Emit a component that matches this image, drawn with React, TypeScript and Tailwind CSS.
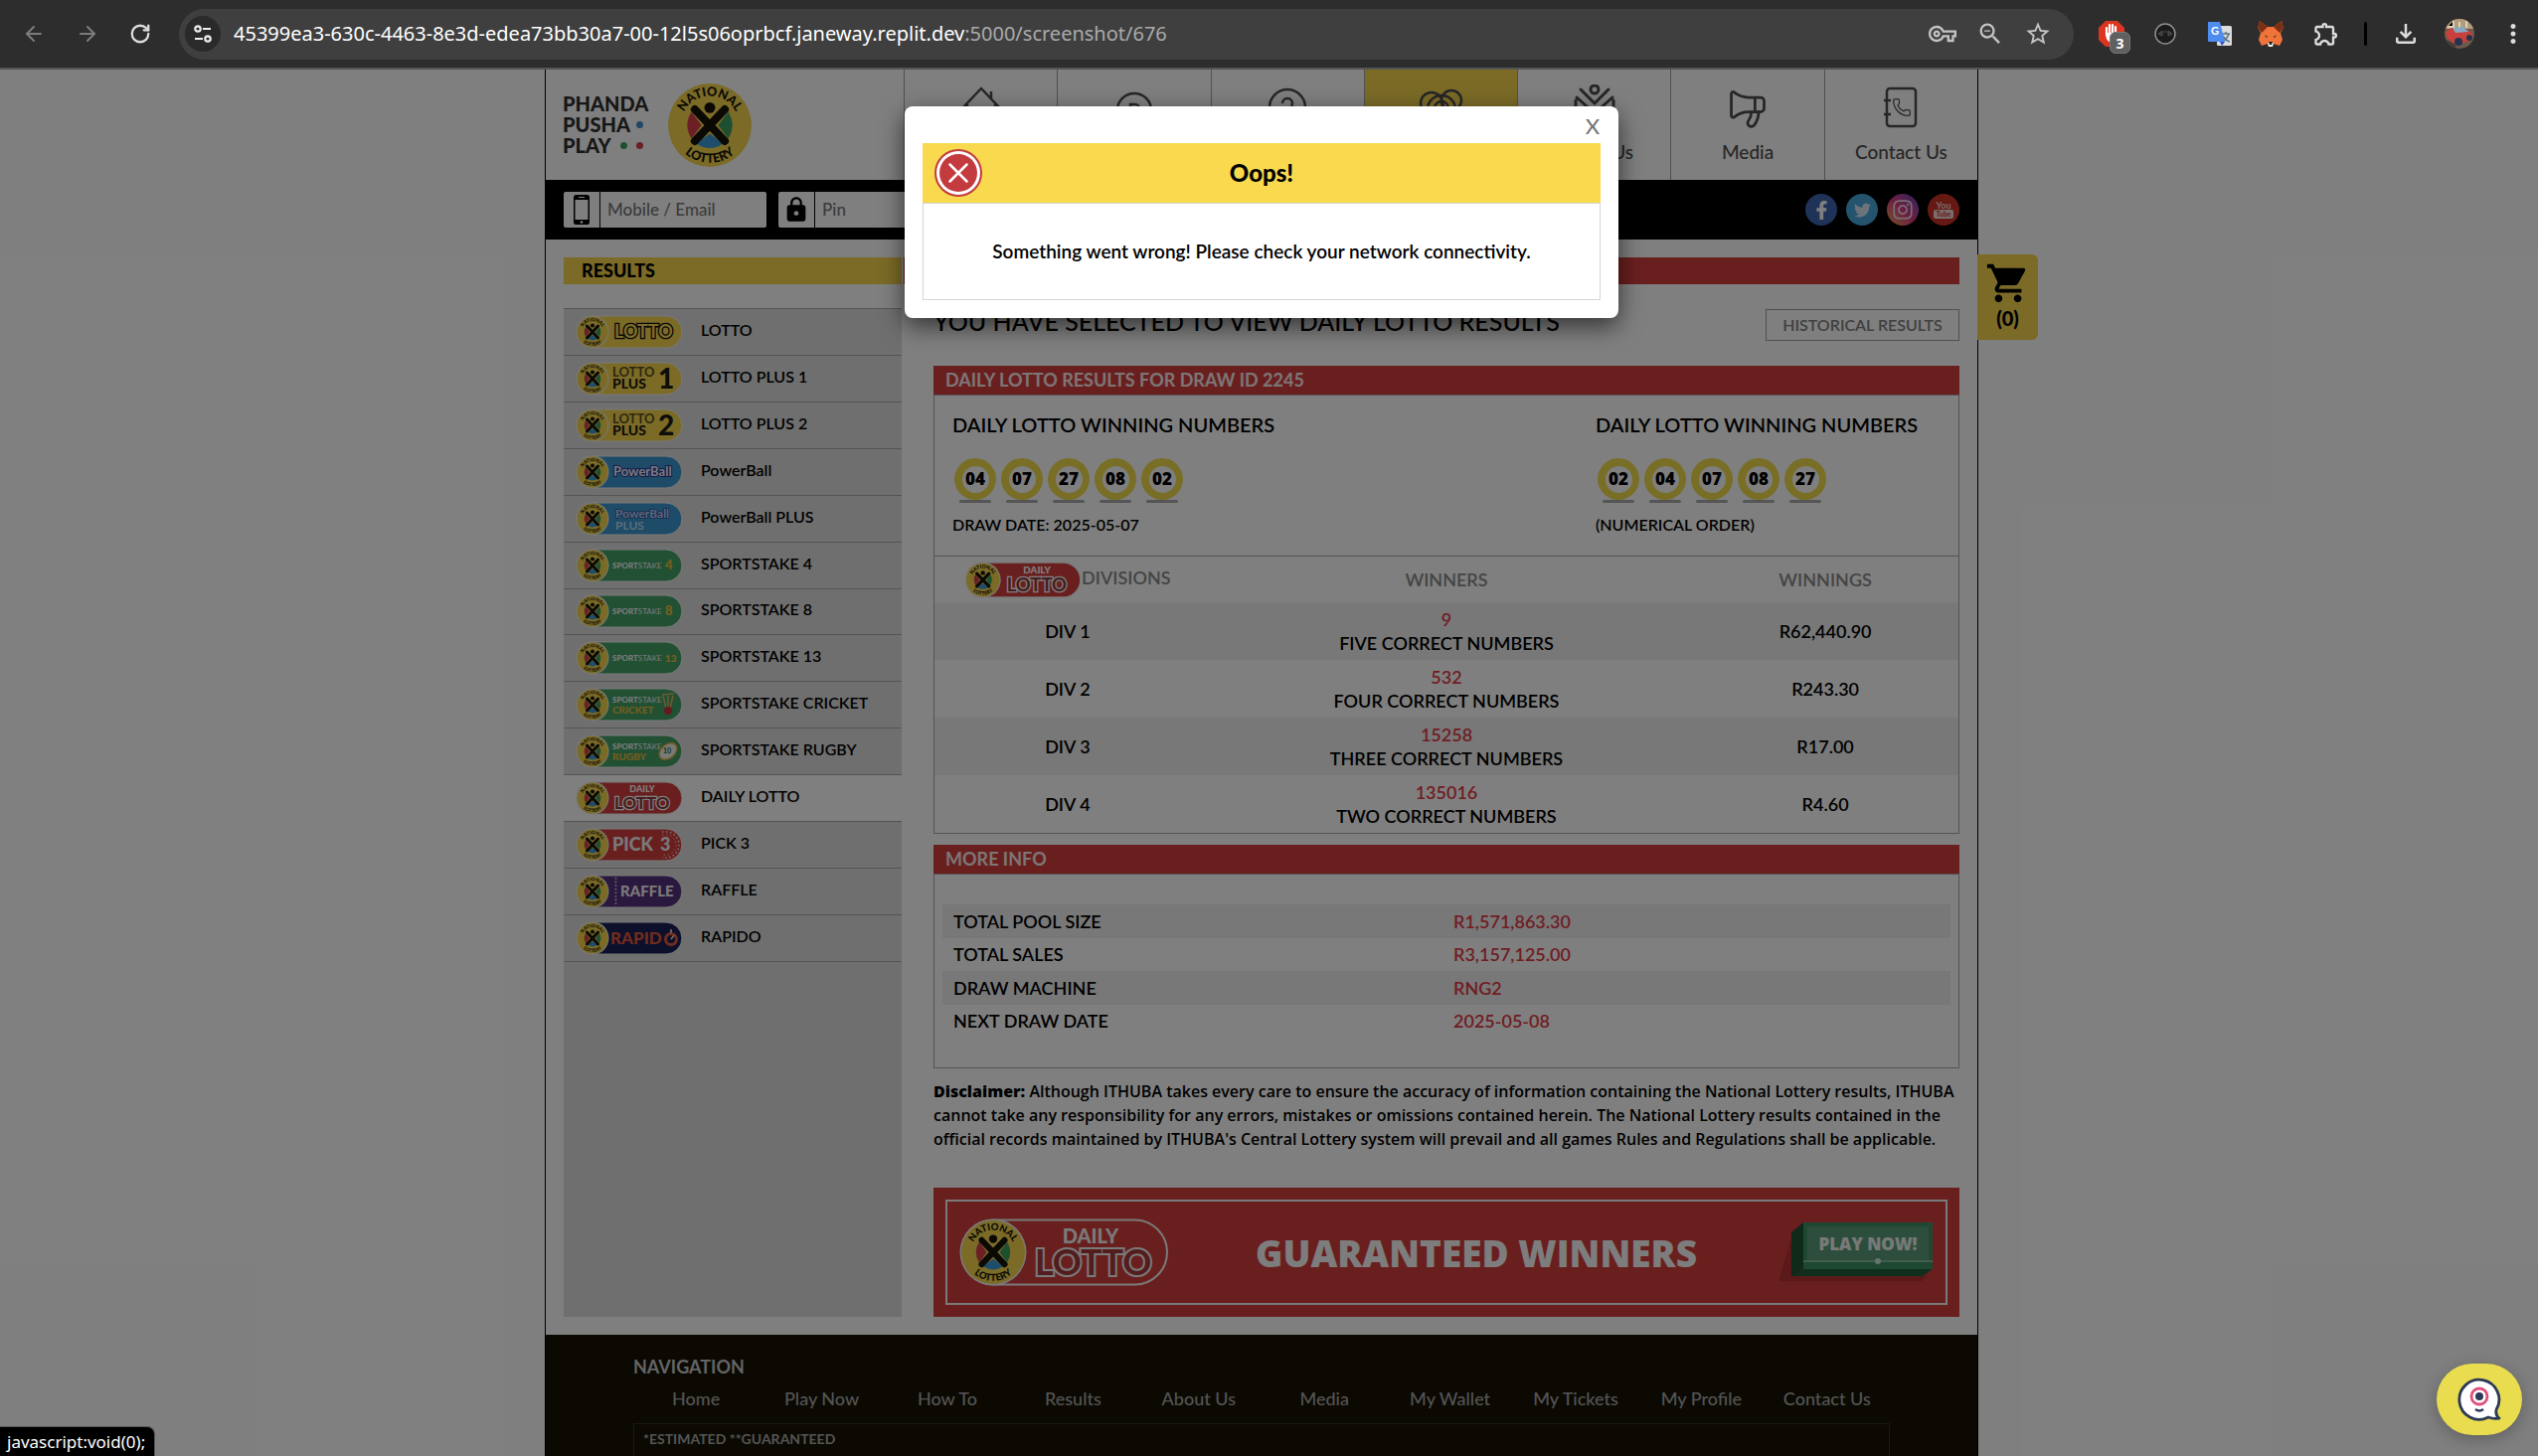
import React from "react";
import { ArrowLeft, ArrowRight, RotateCw, Megaphone, Phone } from "lucide-react";
import {
  MdOutlineStarBorder,
  MdZoomOut,
  MdOutlineVpnKey,
  MdOutlineExtension,
  MdOutlineFileDownload,
  MdMoreVert,
  MdShoppingCart,
  MdLock,
} from "react-icons/md";
import { FaFacebookF, FaTwitter, FaInstagram } from "react-icons/fa";

/* ---------- National Lottery emblem ---------- */
function Emblem({ id }: { id: string }) {
  return (
    <g>
      <defs>
        <path id={`${id}-t`} d="M15,50 A35,35 0 0 1 85,50" />
        <path id={`${id}-b`} d="M5,50 A45,45 0 0 0 95,50" />
      </defs>
      <circle cx="50" cy="50" r="50" fill="#f6d64e" />
      <path d="M40,50 L28,34 Q18,50 28,66 Z" fill="#d8404a" />
      <path d="M60,50 L72,34 Q82,50 72,66 Z" fill="#3f9e63" />
      <path d="M50,60 L34,72 Q50,83 66,72 Z" fill="#3f9bd8" />
      <path d="M32,31 L68,69 M68,31 L32,69" stroke="#151209" strokeWidth="9.5" strokeLinecap="round" />
      <circle cx="50" cy="29" r="6.5" fill="#151209" />
      <text fontFamily="Lato" fontWeight="900" fontSize="15" fill="#151209">
        <textPath href={`#${id}-t`} startOffset="50%" textAnchor="middle">NATIONAL</textPath>
      </text>
      <text fontFamily="Lato" fontWeight="900" fontSize="15" fill="#151209">
        <textPath href={`#${id}-b`} startOffset="50%" textAnchor="middle">LOTTERY</textPath>
      </text>
    </g>
  );
}

type Brand =
  | "lotto" | "plus1" | "plus2" | "pb" | "pbplus" | "ss4" | "ss8" | "ss13"
  | "cricket" | "rugby" | "daily" | "pick3" | "raffle" | "rapido";

const pillFill: Record<Brand, string> = {
  lotto: "#f6d64e", plus1: "#f6d64e", plus2: "#f6d64e",
  pb: "#3a97d0", pbplus: "#3a97d0",
  ss4: "#43a066", ss8: "#43a066", ss13: "#43a066", cricket: "#43a066", rugby: "#43a066",
  daily: "#d43e3e", pick3: "#d43e3e", raffle: "#56307c", rapido: "#1b2054",
};

function Sport({ y }: { y: number }) {
  return (
    <text x="36" y={y} fontSize="8" fill="#f4f4f4">
      <tspan fontWeight="900">SPORT</tspan>
      <tspan fontWeight="400">STAKE</tspan>
    </text>
  );
}

function PillText({ brand }: { brand: Brand }) {
  switch (brand) {
    case "lotto":
      return <text x="38" y="22" fontSize="18" fontWeight="700" fill="#f6d64e" stroke="#111" strokeWidth="2.6" paintOrder="stroke">LOTTO</text>;
    case "plus1":
    case "plus2":
      return (
        <g fill="#1c1a12">
          <text x="36" y="14" fontSize="13" fontWeight="700" fill="#5a5020">LOTTO</text>
          <text x="36" y="26" fontSize="14" fontWeight="900">PLUS</text>
          <text x="82" y="26" fontSize="28" fontWeight="900">{brand === "plus1" ? "1" : "2"}</text>
        </g>
      );
    case "pb":
      return <text x="37" y="20" fontSize="13" fontWeight="700" fill="#f0f2ff" stroke="#2a3590" strokeWidth="2" paintOrder="stroke">PowerBall</text>;
    case "pbplus":
      return (
        <g>
          <text x="39" y="15" fontSize="12" fontWeight="700" fill="#b8cef4" stroke="#34509c" strokeWidth="1.5" paintOrder="stroke">PowerBall</text>
          <text x="39" y="27" fontSize="12" fontWeight="700" fill="#b8dcf4">PLUS</text>
        </g>
      );
    case "ss4":
    case "ss8":
    case "ss13":
      return (
        <g>
          <Sport y={19} />
          <text x="89" y="20" fontSize={brand === "ss13" ? 10 : 13} fontWeight="900" fill="#e8c040">
            {brand === "ss4" ? "4" : brand === "ss8" ? "8" : "13"}
          </text>
        </g>
      );
    case "cricket":
      return (
        <g>
          <Sport y={14} />
          <text x="36" y="25" fontSize="10" fontWeight="900" fill="#e8bc40">CRICKET</text>
          <path d="M87,7 L90,20 M92,7 V20 M97,7 L94,20 M86,6 L98,5" stroke="#d8b35e" strokeWidth="1.6" />
          <circle cx="92" cy="22" r="4" fill="#c8343c" />
        </g>
      );
    case "rugby":
      return (
        <g>
          <Sport y={14} />
          <text x="36" y="25" fontSize="10" fontWeight="900" fill="#e8bc40">RUGBY</text>
          <ellipse cx="92" cy="16" rx="10" ry="7" transform="rotate(-40 92 16)" fill="#f3f3ea" stroke="#d8b34a" strokeWidth="1.5" />
          <text x="87" y="18" fontSize="7" fontWeight="700" fill="#246b45">10</text>
        </g>
      );
    case "daily":
      return (
        <g>
          <text x="66" y="10" fontSize="9" fontWeight="900" fill="#fff" textAnchor="middle">DAILY</text>
          <text x="38" y="27" fontSize="17" fontWeight="700" fill="#8c3a3c" stroke="#fff" strokeWidth="2.4" paintOrder="stroke">LOTTO</text>
        </g>
      );
    case "pick3":
      return (
        <g>
          <path d="M86,3 H90 A13,13 0 0 1 90,29 H86" fill="none" stroke="#fbd8d8" strokeWidth="1.6" strokeDasharray="1.5 2.5" />
          <path d="M86,6 H90 A10,10 0 0 1 90,26 H86" fill="none" stroke="#fbb" strokeWidth="1" strokeDasharray="1.5 2.5" />
          <text x="36" y="22" fontSize="18" fontWeight="900" fill="#f2f2f6">PICK</text>
          <text x="84" y="22" fontSize="18" fontWeight="900" fill="#f2f2f6">3</text>
        </g>
      );
    case "raffle":
      return (
        <g>
          <path d="M39.500,2 V30" stroke="#ddd" strokeWidth="1.6" strokeDasharray="1.6 2" />
          <text x="44" y="21" fontSize="15" fontWeight="900" fill="#f2f2f6">RAFFLE</text>
        </g>
      );
    case "rapido":
      return (
        <g>
          <text x="34" y="22" fontSize="17" fontWeight="900" fill="#e0583a">RAPID</text>
          <circle cx="95" cy="17" r="5.5" fill="none" stroke="#e0583a" strokeWidth="3" />
          <path d="M95,7 V11 M95,17 L98,13" stroke="#f0dada" strokeWidth="1.6" />
        </g>
      );
  }
}

function BrandPill({ brand, className, id }: { brand: Brand; className: string; id: string }) {
  return (
    <svg viewBox="-1 -1 108 34" className={className} fontFamily="Lato" aria-hidden="true">
      <rect x="0" y="0" width="106" height="32" rx="16" fill={pillFill[brand]} stroke="#f2f2f2" strokeWidth="1" />
      <circle cx="16" cy="16" r="16.500" fill="#f2f2f2" />
      <g transform="translate(0.500 0.500) scale(0.31)">
        <Emblem id={id} />
      </g>
      <PillText brand={brand} />
    </svg>
  );
}

/* ---------- Browser toolbar ---------- */
function Toolbar() {
  return (
    <div className="flex h-[70px] shrink-0 items-center border-b-2 border-[#555] bg-[#2d2d2d] pr-[10px] pl-[22px] font-['Noto_Sans',sans-serif] text-[#dcdcdc]">
      <div className="flex items-center gap-[30px]">
        <button aria-label="Back" className="text-[#7c7c7c]"><ArrowLeft size={24} /></button>
        <button aria-label="Forward" className="text-[#7c7c7c]"><ArrowRight size={24} /></button>
        <button aria-label="Reload"><RotateCw size={22} strokeWidth={2.500} /></button>
      </div>
      <div className="ml-[28px] flex h-[51px] flex-1 items-center rounded-full bg-[#3f3f3f] pr-[22px] pl-[6px]">
        <button aria-label="Site information" className="flex size-9 items-center justify-center rounded-full bg-[#2a2a2a]">
          <svg viewBox="0 0 20 20" className="size-5" fill="none" stroke="#eee" strokeWidth="2.200">
            <circle cx="5" cy="5" r="2.700" /><path d="M10,5 H18 M2,15 H10" /><circle cx="15" cy="15" r="2.700" />
          </svg>
        </button>
        <p className="ml-[13px] flex-1 text-[20px] whitespace-nowrap text-white">
          45399ea3-630c-4463-8e3d-edea73bb30a7-00-12l5s06oprbcf.janeway.replit.dev
          <span className="text-[#aaa]">:5000/screenshot/676</span>
        </p>
        <div className="flex items-center gap-[20px] text-[#c4c4c4]">
          <button aria-label="Passwords"><MdOutlineVpnKey size={28} /></button>
          <button aria-label="Zoom"><MdZoomOut size={28} /></button>
          <button aria-label="Bookmark"><MdOutlineStarBorder size={28} /></button>
        </div>
      </div>
      <div className="ml-[24px] flex items-center gap-[24px]">
        <button aria-label="Ad blocker" className="relative">
          <svg viewBox="0 0 28 28" className="size-7">
            <path d="M8,1 H20 L27,8 V20 L20,27 H8 L1,20 V8 Z" fill="#dc3522" />
            <path d="M9,15 V8 M12,14 V5 M15,14 V5 M18,15 V7" stroke="#fff" strokeWidth="2.200" strokeLinecap="round" />
            <path d="M8,13 H19 L21,12 Q20,23 14,23 Q8,22 8,13" fill="#fff" />
          </svg>
          <span className="absolute top-3 left-3 flex h-[22px] w-[21px] items-center justify-center rounded-md border border-[#777] bg-[#606060] text-[14px] font-bold text-white">3</span>
        </button>
        <button aria-label="Wheel extension" className="ml-1">
          <svg viewBox="0 0 24 24" className="size-6">
            <circle cx="12" cy="12" r="10" fill="#1b1b1b" stroke="#8f8f8f" strokeWidth="1.500" />
            <path d="M5,12 L9,9 V14 Z M19,12 L15,9 V14 Z M10,10 H14" stroke="#4f4f4f" fill="#3c3c3c" />
          </svg>
        </button>
        <button aria-label="Translate" className="ml-[6px]">
          <svg viewBox="0 0 26 26" className="size-[26px]">
            <rect x="10" y="5" width="15" height="20" rx="1.500" fill="#dcdcdc" />
            <path d="M15,13 H23 M19,11 V13 M22,13 Q20,19 15,21 M16,15 Q19,20 23,21" stroke="#5d7482" strokeWidth="1.500" fill="none" />
            <path d="M1,1 H13 L18,21 H2 Q1,21 1,20 Z" fill="#4e8df0" />
            <path d="M13,21 H18 L15,25 Z" fill="#2f50c8" />
            <text x="4" y="14" fontSize="11" fontWeight="700" fill="#fff" fontFamily="Lato">G</text>
          </svg>
        </button>
        <button aria-label="Fox wallet">
          <svg viewBox="0 0 28 28" className="size-7">
            <path d="M3,1 L11,7 H17 L25,1 L27,8 L24,13 L26,20 L23,26 L17,24 L16,27 H12 L11,24 L5,26 L2,20 L4,13 L1,8 Z" fill="#f0743a" />
            <path d="M3,1 L11,7 L5,13 L1,8 Z M25,1 L17,7 L23,13 L27,8 Z" fill="#7c2f14" />
            <path d="M11,23 H17 L16,27 H12 Z" fill="#eee" />
            <path d="M12,22 H16 L15,25 H13 Z M8,15 L11,17 L10,18 Z M20,15 L17,17 L18,18 Z" fill="#222" />
          </svg>
        </button>
        <button aria-label="Extensions" className="ml-1"><MdOutlineExtension size={28} /></button>
        <span className="h-6 w-[3px] rounded bg-black" />
        <button aria-label="Downloads"><MdOutlineFileDownload size={30} /></button>
        <button aria-label="Profile">
          <svg viewBox="0 0 30 30" className="size-[30px]">
            <clipPath id="avatar"><circle cx="15" cy="15" r="15" /></clipPath>
            <g clipPath="url(#avatar)">
              <rect width="30" height="30" fill="#6e5a4c" />
              <rect width="30" height="10" fill="#b39c7a" />
              <path d="M3,8 H9 V2 M15,3 V10 M22,2 V9" stroke="#dcd2bc" strokeWidth="2" />
              <path d="M1,13 L7,9 L20,9 L28,15 L28,21 L12,26 L3,20 Z" fill="#c8403c" />
              <path d="M8,9 L19,8 L24,13 L11,14 Z" fill="#86a8c4" />
              <path d="M0,20 L11,26 V30 H0 Z" fill="#4a3a34" />
              <circle cx="14" cy="23" r="4" fill="#26324e" /><circle cx="25" cy="19" r="3" fill="#26324e" />
            </g>
          </svg>
        </button>
        <button aria-label="Menu"><MdMoreVert size={30} /></button>
      </div>
    </div>
  );
}

/* ---------- Site header ---------- */
const navItems = ["Home", "Play Now", "How To", "Results", "About Us", "Media", "Contact Us"];

function NavIcon({ name }: { name: string }) {
  const p = { viewBox: "0 0 48 48", className: "size-12", fill: "none", stroke: "#4c4c4c", strokeWidth: 2.5 };
  switch (name) {
    case "Home":
      return <svg {...p}><path d="M4,25 L24,4 L44,25 M10,20 V44 H38 V20 M34,14 V7" /></svg>;
    case "Play Now":
      return <svg {...p}><circle cx="24" cy="26" r="17" /><path d="M20,34 V20 H25 A4,4 0 0 1 25,28 H20 M25,28 L29,34" /></svg>;
    case "How To":
      return <svg {...p}><circle cx="24" cy="23" r="18" /><path d="M19,19 A5,5 0 1 1 25,24 V28 M25,32 V34" /></svg>;
    case "Results":
      return <svg {...p}><circle cx="15" cy="19" r="11" /><circle cx="35" cy="16" r="10" /><circle cx="25" cy="25" r="14" /><circle cx="25" cy="24" r="7" /></svg>;
    case "About Us":
      return <svg {...p} strokeWidth={3}><circle cx="24" cy="5" r="4" /><path d="M10,5 L24,19 L38,5 M5,16 V28 L16,38 M43,16 V28 L32,38 M6,13 L24,29 L42,13" strokeLinecap="round" /></svg>;
    case "Media":
      return <Megaphone size={44} strokeWidth={1.500} className="-scale-x-100" />;
    default:
      return (
        <span className="relative flex">
          <svg {...p}><rect x="10" y="4" width="29" height="38" rx="3" /><path d="M7,16 H14 M7,30 H14" /></svg>
          <Phone size={20} strokeWidth={1.500} className="absolute top-[13px] left-[15px]" />
        </span>
      );
  }
}

function Logo() {
  return (
    <div className="flex w-[360px] shrink-0 items-center pl-[17px]">
      <div className="text-[20px] leading-[21px] font-black text-[#2e2e2e]">
        <p>PHANDA</p>
        <p className="flex items-center gap-[6px]">PUSHA <i className="size-[7px] rounded-full bg-[#3f8fd0]" /></p>
        <p className="flex items-center gap-[9px]">PLAY <i className="size-[7px] rounded-full bg-[#3f9e63]" /><i className="size-[7px] rounded-full bg-[#d8404a]" /></p>
      </div>
      <svg viewBox="0 0 100 100" className="ml-5 size-[84px]" role="img" aria-label="National Lottery"><Emblem id="main" /></svg>
    </div>
  );
}

function Header() {
  return (
    <header>
      <div className="flex h-[111px]">
        <Logo />
        <nav className="grid flex-1 grid-cols-7">
          {navItems.map((n) => (
            <a key={n} href="#" className={`flex flex-col items-center border-l border-[#a0a0a0] pt-[14px] text-[19px] leading-6 font-medium text-[#4c4c4c] ${n === "Results" ? "bg-[#f6d64e]" : ""}`}>
              <span className="mb-[7px] flex h-[50px] items-center"><NavIcon name={n} /></span>
              {n}
            </a>
          ))}
        </nav>
      </div>
      <div className="flex h-[60px] items-center gap-[12px] bg-black px-[18px]">
        <label className="flex h-9 w-[204px] overflow-hidden rounded-xs bg-white">
          <span className="flex w-[37px] shrink-0 items-center justify-center border-r border-black">
            <svg viewBox="0 0 16 30" className="h-[30px] w-4" aria-label="Mobile or email">
              <rect width="16" height="30" rx="2.500" /><rect x="1.500" y="5" width="13" height="20" fill="#fff" />
              <circle cx="8" cy="27.500" r="1.300" fill="#fff" /><path d="M5,2.500 H11" stroke="#fff" />
            </svg>
          </span>
          <input className="w-full min-w-0 px-[7px] text-[17px] font-medium placeholder:text-[#777]" placeholder="Mobile / Email" />
        </label>
        <label className="flex h-9 w-[204px] overflow-hidden rounded-xs bg-white">
          <span className="flex w-[37px] shrink-0 items-center justify-center border-r border-black"><MdLock size={28} aria-label="Pin" /></span>
          <input type="password" className="w-full min-w-0 px-[7px] text-[17px] font-medium placeholder:text-[#777]" placeholder="Pin" />
        </label>
        <div className="ml-auto flex gap-[9px]">
          <a href="#" aria-label="Facebook" className="flex size-8 items-center justify-center rounded-full bg-[#3f65b0] text-white"><FaFacebookF size={19} /></a>
          <a href="#" aria-label="Twitter" className="flex size-8 items-center justify-center rounded-full bg-[#48a6dc] text-[#d8e8f4]"><FaTwitter size={17} /></a>
          <a href="#" aria-label="Instagram" className="flex size-8 items-center justify-center rounded-full bg-linear-to-tr from-[#f0a040] via-[#d83880] to-[#6038c0] text-[#f4dcec]"><FaInstagram size={22} /></a>
          <a href="#" aria-label="YouTube" className="flex size-8 flex-col items-center justify-center rounded-full bg-[#cc3126] text-[9px] leading-[9px] font-bold text-[#f4dcdc]">
            You<span className="rounded-xs bg-[#f4dcdc] px-[2px] text-[7px] text-[#cc3126]">Tube</span>
          </a>
        </div>
      </div>
    </header>
  );
}

/* ---------- Sidebar ---------- */
const games: [Brand, string][] = [
  ["lotto", "LOTTO"], ["plus1", "LOTTO PLUS 1"], ["plus2", "LOTTO PLUS 2"], ["pb", "PowerBall"],
  ["pbplus", "PowerBall PLUS"], ["ss4", "SPORTSTAKE 4"], ["ss8", "SPORTSTAKE 8"], ["ss13", "SPORTSTAKE 13"],
  ["cricket", "SPORTSTAKE CRICKET"], ["rugby", "SPORTSTAKE RUGBY"], ["daily", "DAILY LOTTO"],
  ["pick3", "PICK 3"], ["raffle", "RAFFLE"], ["rapido", "RAPIDO"],
];

function Sidebar() {
  return (
    <aside className="w-[340px] shrink-0 bg-[#dedede]">
      <ul className="flex h-[658px] flex-col border-t border-[#a8a8a8]">
        {games.map(([b, label]) => (
          <li key={b} className={`flex-1 border-b border-[#a8a8a8] ${b === "daily" ? "bg-white" : ""}`}>
            <a href="#" className="flex h-full items-center pl-3 text-[16px] leading-5 font-semibold">
              <BrandPill brand={b} id={`s-${b}`} className="h-[34px] w-[108px]" />
              <span className="ml-[18px] pb-1">{label}</span>
            </a>
          </li>
        ))}
      </ul>
    </aside>
  );
}

/* ---------- Results ---------- */
function Draw({ numbers, note }: { numbers: string[]; note: string }) {
  return (
    <div>
      <h3 className="text-[20px] leading-6 font-semibold">DAILY LOTTO WINNING NUMBERS</h3>
      <ul className="mt-[22px] flex gap-[5px] pl-[2px]">
        {numbers.map((n) => (
          <li key={n} className="flex w-[42px] flex-col items-center">
            <span className="flex size-[42px] items-center justify-center rounded-full bg-[#f0dc4c]">
              <span className="flex size-[27px] items-center justify-center rounded-full bg-white font-['Open_Sans',sans-serif] text-[17px] font-extrabold">{n}</span>
            </span>
            <span className="h-[3px] w-[32px] rounded-full bg-[#aaa]" />
          </li>
        ))}
      </ul>
      <p className="mt-[10px] text-[16px] leading-6 font-semibold">{note}</p>
    </div>
  );
}

const divisions = [
  ["DIV 1", "9", "FIVE CORRECT NUMBERS", "R62,440.90"],
  ["DIV 2", "532", "FOUR CORRECT NUMBERS", "R243.30"],
  ["DIV 3", "15258", "THREE CORRECT NUMBERS", "R17.00"],
  ["DIV 4", "135016", "TWO CORRECT NUMBERS", "R4.60"],
];

const info = [
  ["TOTAL POOL SIZE", "R1,571,863.30"],
  ["TOTAL SALES", "R3,157,125.00"],
  ["DRAW MACHINE", "RNG2"],
  ["NEXT DRAW DATE", "2025-05-08"],
];

function Bar({ children }: { children: React.ReactNode }) {
  return <h2 className="h-[29px] bg-[#d43e3e] pl-3 text-[18px] leading-[28px] font-bold text-[#f8ecec]">{children}</h2>;
}

function Banner() {
  return (
    <div className="mt-[37px] bg-[#d43e3e] p-3">
      <div className="flex h-[106px] items-center border-2 border-[#f4f4f4] px-3">
        <svg viewBox="-1 -1 212 68" className="h-[68px] w-[212px] shrink-0" fontFamily="Lato" role="img" aria-label="Daily Lotto">
          <rect x="1" y="0.500" width="207" height="65" rx="32.500" fill="#d43e3e" stroke="#f4f4f4" strokeWidth="2" />
          <circle cx="33" cy="33" r="33.500" fill="#f4f4f4" />
          <g transform="translate(1 1) scale(0.64)"><Emblem id="banner" /></g>
          <text x="131" y="24" fontSize="20" fontWeight="900" fill="#f4f4f4" textAnchor="middle">DAILY</text>
          <text x="75" y="56" fontSize="36" fontWeight="700" fill="#a83a3a" stroke="#f4f4f4" strokeWidth="4" paintOrder="stroke">LOTTO</text>
        </svg>
        <p className="ml-[86px] font-['Open_Sans',sans-serif] text-[37px] leading-none font-extrabold whitespace-nowrap text-[#fbfbfb]">GUARANTEED WINNERS</p>
        <button className="relative ml-auto h-[60px] w-[156px] shrink-0">
          <svg viewBox="0 0 156 60" className="size-full" aria-hidden="true">
            <path d="M0,59 L14,12 V54 H150 L144,59 Z" fill="#b83232" />
            <path d="M13,10 L25,0 V47 L13,54 Z" fill="#1f5236" />
            <path d="M25,47 H155 L145,54 H13 Z" fill="#1f5c3a" />
            <rect x="25" y="0" width="130" height="47" fill="#3f9064" />
            <rect x="29" y="4" width="122" height="34" fill="#5a9c78" />
            <path d="M25,39 H155" stroke="#9ccab0" strokeWidth="1.500" />
            <circle cx="100" cy="39" r="3" fill="#cfe8d8" />
          </svg>
          <span className="absolute inset-x-0 top-[10px] pl-[24px] text-center font-['Open_Sans',sans-serif] text-[17px] leading-6 font-extrabold text-[#f0f4f0]">PLAY NOW!</span>
        </button>
      </div>
    </div>
  );
}

function Results() {
  return (
    <section className="min-w-0 flex-1 pt-px">
      <div className="flex h-8 items-start justify-between">
        <h1 className="text-[25px] leading-6 font-medium">YOU HAVE SELECTED TO VIEW DAILY LOTTO RESULTS</h1>
        <button className="h-8 w-[195px] border border-[#a0a0a0] text-[16px] font-semibold text-[#808080]">HISTORICAL RESULTS</button>
      </div>

      <div className="mt-[25px]"><Bar>DAILY LOTTO RESULTS FOR DRAW ID 2245</Bar></div>
      <div className="border border-[#a8a8a8]">
        <div className="flex justify-between border-b border-[#a8a8a8] pt-[17px] pb-[19px] pl-[18px]">
          <Draw numbers={["04", "07", "27", "08", "02"]} note="DRAW DATE: 2025-05-07" />
          <div className="w-[365px]"><Draw numbers={["02", "04", "07", "08", "27"]} note="(NUMERICAL ORDER)" /></div>
        </div>
        <table className="w-full table-fixed text-center text-[18px] leading-6 font-semibold">
          <thead>
            <tr className="h-[46px] text-[#8a8a8a]">
              <th className="w-[26%] font-semibold">
                <span className="flex items-center justify-center">
                  <BrandPill brand="daily" id="divisions" className="h-[37px] w-[118px]" />
                  <span className="pb-1">DIVISIONS</span>
                </span>
              </th>
              <th className="w-[48%] font-semibold">WINNERS</th>
              <th className="w-[26%] font-semibold">WINNINGS</th>
            </tr>
          </thead>
          <tbody>
            {divisions.map(([d, n, t, w]) => (
              <tr key={d} className="h-[58px] odd:bg-[#f1f1f1]">
                <td className="pb-px">{d}</td>
                <td className="pb-px"><span className="text-[#e03a46]">{n}</span><br />{t}</td>
                <td className="pb-px">{w}</td>
              </tr>
            ))}
          </tbody>
        </table>
      </div>

      <div className="mt-[11px]"><Bar>MORE INFO</Bar></div>
      <div className="border border-[#a8a8a8] px-2 pt-[30px] pb-[30px]">
        <table className="h-[134px] w-full table-fixed text-[18px] leading-6 font-semibold">
          <tbody>
            {info.map(([k, v]) => (
              <tr key={k} className="odd:bg-[#f1f1f1]">
                <td className="pl-[11px]">{k}</td>
                <td className="pl-[7px] text-[#e03a46]">{v}</td>
              </tr>
            ))}
          </tbody>
        </table>
      </div>

      <p className="mt-[11px] font-['Open_Sans',sans-serif] text-[16px] leading-6 font-semibold whitespace-nowrap">
        <b className="font-extrabold">Disclaimer:</b> Although ITHUBA takes every care to ensure the accuracy of information containing the National Lottery results, ITHUBA
        <br />cannot take any responsibility for any errors, mistakes or omissions contained herein. The National Lottery results contained in the
        <br />official records maintained by ITHUBA's Central Lottery system will prevail and all games Rules and Regulations shall be applicable.
      </p>
      <Banner />
    </section>
  );
}

/* ---------- Footer ---------- */
const footerLinks = ["Home", "Play Now", "How To", "Results", "About Us", "Media", "My Wallet", "My Tickets", "My Profile", "Contact Us"];

function Footer() {
  return (
    <footer className="bg-[#161304] px-[88px] pt-5 text-[#a8a8a8]">
      <h2 className="text-[18px] leading-6 font-bold text-[#c8c8c8]">NAVIGATION</h2>
      <nav className="mt-2 grid grid-cols-10 text-center text-[18px] leading-6 font-medium">
        {footerLinks.map((l) => <a key={l} href="#">{l}</a>)}
      </nav>
      <div className="mt-[13px] h-40 border border-[#303030] pt-[3px] pl-[9px] text-[14px] leading-6 font-bold">*ESTIMATED **GUARANTEED</div>
    </footer>
  );
}

/* ---------- Dialog ---------- */
function ErrorDialog() {
  return (
    <div role="dialog" aria-label="Oops!" className="absolute top-[37px] left-1/2 w-[718px] -translate-x-1/2 rounded-lg bg-white px-[18px] pb-[18px] shadow-[0_8px_24px_rgba(0,0,0,0.6)]">
      <div className="flex h-[37px] items-center justify-end">
        <button aria-label="Close" className="w-4 pt-[3px] text-[22px] leading-6 font-medium text-[#777]">X</button>
      </div>
      <div className="flex h-[60px] items-center bg-[#f9d94e] px-3">
        <svg viewBox="0 0 48 48" className="size-12" aria-hidden="true">
          <circle cx="24" cy="24" r="24" fill="#c33a3f" /><circle cx="24" cy="24" r="22" fill="#fff" /><circle cx="24" cy="24" r="19" fill="#c33a3f" />
          <path d="M15.500,15.500 L32.500,32.500 M32.500,15.500 L15.500,32.500" stroke="#fff" strokeWidth="2.500" strokeLinecap="round" />
        </svg>
        <h2 className="flex-1 pr-12 text-center text-[24px] leading-8 font-black">Oops!</h2>
      </div>
      <p className="border border-[#d6d6d6] py-9 text-center text-[19px] leading-6 font-semibold">Something went wrong! Please check your network connectivity.</p>
    </div>
  );
}

export default function App() {
  return (
    <div className="flex h-screen flex-col overflow-hidden font-['Lato',sans-serif] text-black">
      <Toolbar />
      <div className="relative min-h-0 flex-1 overflow-hidden bg-white">
        <div className="pr-[15px]">
          <div className="relative mx-auto max-w-[1442px] border-x border-black">
            <Header />
            <main className="px-[18px] pt-[18px] pb-[18px]">
              <div className="flex gap-[2px]">
                <h2 className="h-[27px] w-[340px] bg-[#f6d64e] pl-[18px] text-[18px] leading-[26px] font-black">RESULTS</h2>
                <div className="h-[27px] flex-1 bg-[#d43e3e]" />
              </div>
              <div className="mt-6 flex gap-8">
                <Sidebar />
                <Results />
              </div>
            </main>
            <Footer />
            <a href="#" aria-label="Cart" className="absolute top-[186px] left-full flex h-[86px] w-[61px] flex-col items-center rounded-r-md bg-[#f6d64e] pt-[6px]">
              <MdShoppingCart size={46} />
              <span className="text-[20px] leading-6 font-black">(0)</span>
            </a>
          </div>
        </div>
        <div className="absolute inset-0 bg-black/50" />
        <div className="absolute inset-y-0 right-[15px] left-0"><ErrorDialog /></div>
        <button aria-label="Chat" className="absolute right-4 bottom-[21px] flex h-[72px] w-[86px] items-center justify-center rounded-full bg-[#e9dc4f] shadow-[0_4px_16px_rgba(0,0,0,0.25)]">
          <svg viewBox="0 0 48 48" className="size-12" fill="none">
            <path d="M33,42 A20,20 0 1 1 41,34.500 Q40,40 44,43 Q38,44 33,42 Z" fill="#fff" stroke="#2c3a57" strokeWidth="2.800" strokeLinejoin="round" />
            <circle cx="24" cy="21" r="8" stroke="#e0507a" strokeWidth="2.800" />
            <circle cx="24" cy="21" r="4" fill="#2c3a57" />
            <path d="M20,34 Q24,37 28,34" stroke="#2c3a57" strokeWidth="2.500" />
          </svg>
        </button>
        <div className="absolute bottom-0 left-0 h-[30px] w-[156px] rounded-tr-lg border-t border-r border-[#555] bg-black pl-[7px] font-['Noto_Sans',sans-serif] text-[17px] leading-[29px] text-white">javascript:void(0);</div>
      </div>
    </div>
  );
}
